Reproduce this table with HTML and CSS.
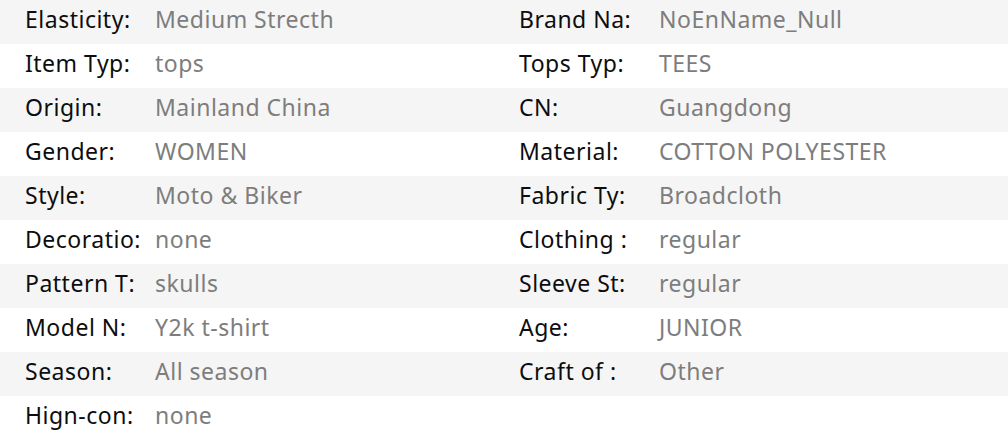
FILE: index.html
```html
<!DOCTYPE html>
<html>
<head>
<meta charset="utf-8">
<link rel="stylesheet" href="styles.css">
</head>
<body>
<div class="specs">
  <div class="row">
    <div class="cell"><span class="label">Elasticity:</span><span class="value">Medium Strecth</span></div>
    <div class="cell right"><span class="label">Brand Na:</span><span class="value">NoEnName_Null</span></div>
  </div>
  <div class="row">
    <div class="cell"><span class="label">Item Typ:</span><span class="value">tops</span></div>
    <div class="cell right"><span class="label">Tops Typ:</span><span class="value">TEES</span></div>
  </div>
  <div class="row">
    <div class="cell"><span class="label">Origin:</span><span class="value">Mainland China</span></div>
    <div class="cell right"><span class="label">CN:</span><span class="value">Guangdong</span></div>
  </div>
  <div class="row">
    <div class="cell"><span class="label">Gender:</span><span class="value">WOMEN</span></div>
    <div class="cell right"><span class="label">Material:</span><span class="value">COTTON POLYESTER</span></div>
  </div>
  <div class="row">
    <div class="cell"><span class="label">Style:</span><span class="value">Moto &amp; Biker</span></div>
    <div class="cell right"><span class="label">Fabric Ty:</span><span class="value">Broadcloth</span></div>
  </div>
  <div class="row">
    <div class="cell"><span class="label">Decoratio:</span><span class="value">none</span></div>
    <div class="cell right"><span class="label">Clothing :</span><span class="value">regular</span></div>
  </div>
  <div class="row">
    <div class="cell"><span class="label">Pattern T:</span><span class="value">skulls</span></div>
    <div class="cell right"><span class="label">Sleeve St:</span><span class="value">regular</span></div>
  </div>
  <div class="row">
    <div class="cell"><span class="label">Model N:</span><span class="value">Y2k t-shirt</span></div>
    <div class="cell right"><span class="label">Age:</span><span class="value">JUNIOR</span></div>
  </div>
  <div class="row">
    <div class="cell"><span class="label">Season:</span><span class="value">All season</span></div>
    <div class="cell right"><span class="label">Craft of :</span><span class="value">Other</span></div>
  </div>
  <div class="row">
    <div class="cell"><span class="label">Hign-con:</span><span class="value">none</span></div>
    <div class="cell right"></div>
  </div>
</div>
</body>
</html>
```
FILE: styles.css
```css
html, body {
  margin: 0;
  padding: 0;
  background: #ffffff;
}
.specs {
  width: 1008px;
  font-family: "Noto Sans", "Open Sans", sans-serif;
  font-size: 23px;
  letter-spacing: 0.5px;
}
.row {
  display: grid;
  grid-template-columns: 494px 489px;
  height: 44px;
  box-sizing: border-box;
  padding-left: 25px;
  padding-bottom: 6px;
  align-items: center;
}
.row:nth-child(odd) {
  background: #f5f5f5;
}
.cell {
  display: flex;
  align-items: center;
  white-space: nowrap;
}
.label {
  color: #0d0d0d;
  width: 130px;
  flex: none;
}
.right .label {
  width: 140px;
}
.value {
  color: #7d7d7d;
}
```
